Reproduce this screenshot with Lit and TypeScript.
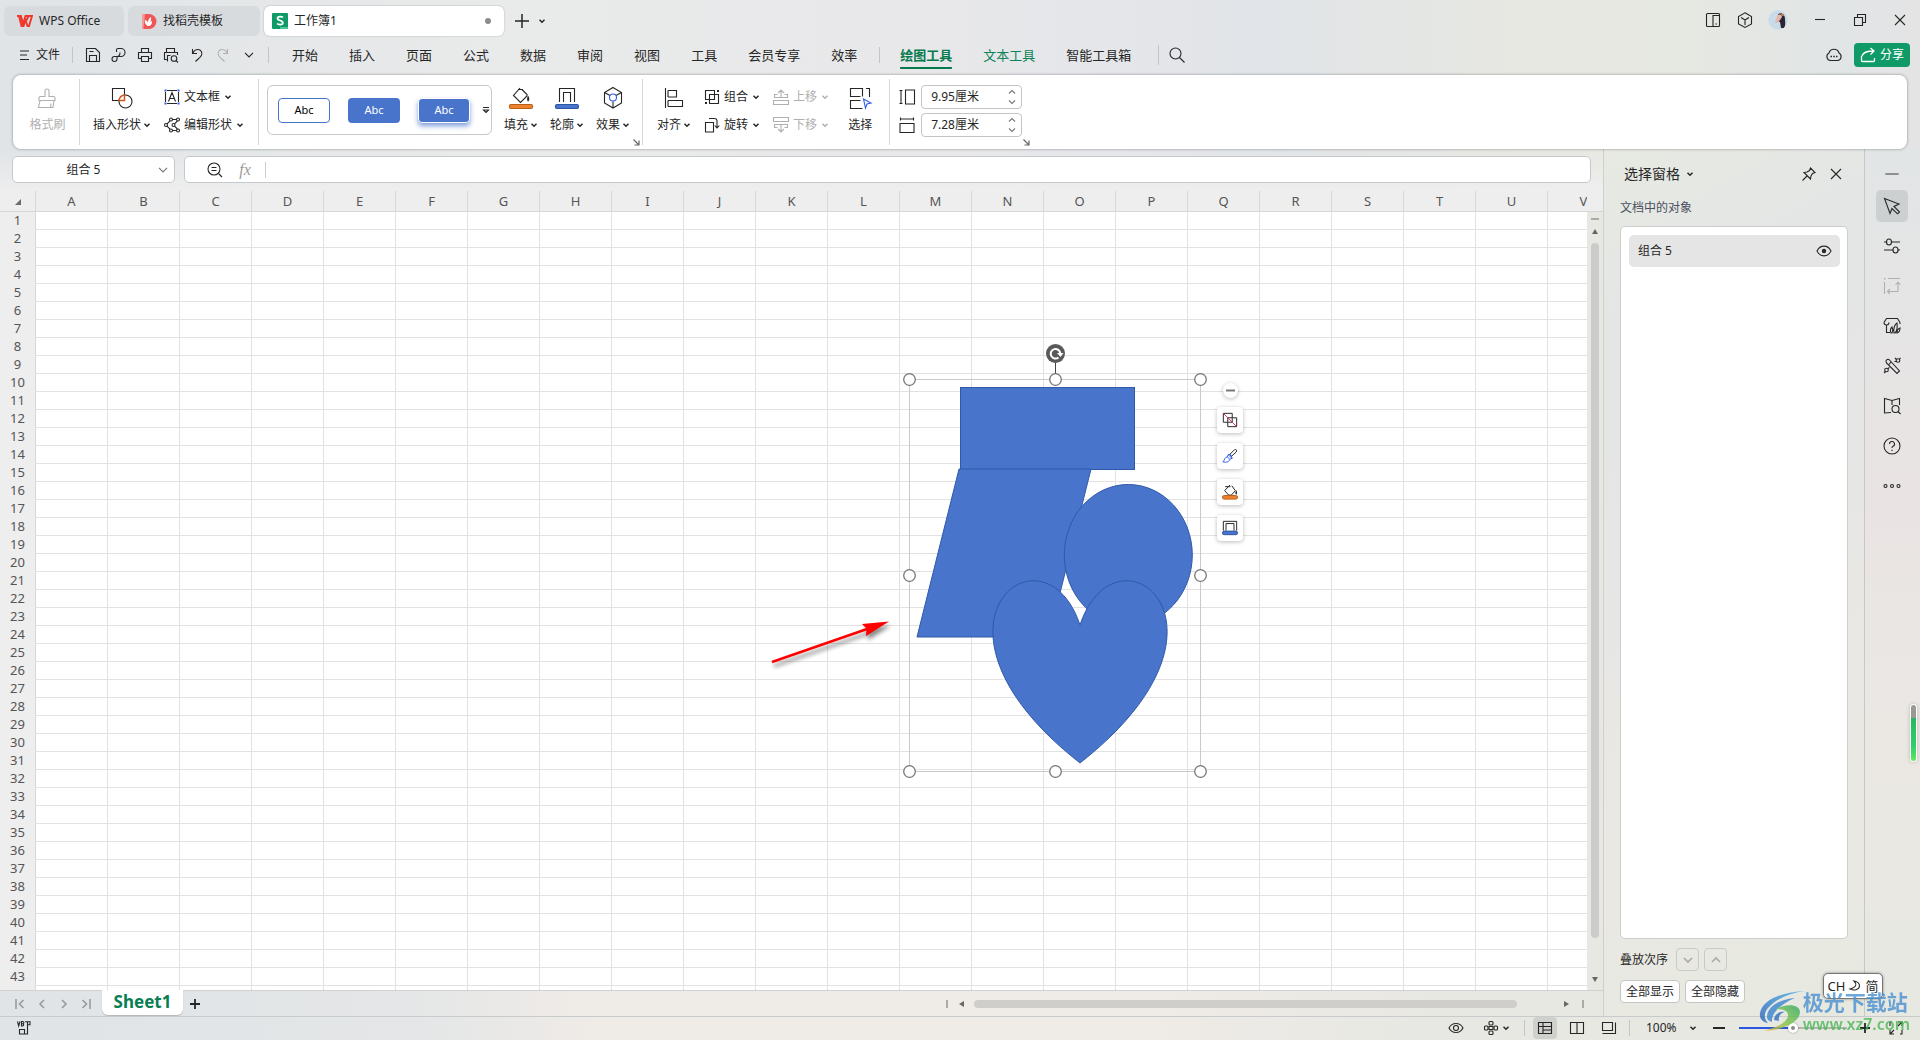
import { LitElement, html, svg, css, nothing, type TemplateResult, type SVGTemplateResult } from "lit";
import { customElement, state } from "lit/decorators.js";
import { classMap } from "lit/directives/class-map.js";

const art = (size: number, body: SVGTemplateResult, box = size) =>
  html`<svg class="icon" width=${size} height=${size} viewBox="0 0 ${box} ${box}" aria-hidden="true">${body}</svg>`;

const chevron = html`<svg class="icon" width="8" height="8" viewBox="0 0 8 8" aria-hidden="true">
  <path d="M1.5 2.8 4 5.2 6.5 2.8" stroke-width="1.5" />
</svg>`;

const thinChevron = html`<svg class="icon" width="10" height="8" viewBox="0 0 10 8" aria-hidden="true">
  <path d="M1 1.8 5 6 9 1.8" />
</svg>`;

const upChevron = html`<svg class="icon" width="8" height="6" viewBox="0 0 8 6" aria-hidden="true">
  <path d="M1 4.5 4 1.5 7 4.5" />
</svg>`;

const downChevron = html`<svg class="icon" width="8" height="6" viewBox="0 0 8 6" aria-hidden="true">
  <path d="M1 1.5 4 4.5 7 1.5" />
</svg>`;

const launcher = html`<button class="launcher" aria-label="更多设置">
  <svg class="icon" width="7" height="7" viewBox="0 0 7 7" aria-hidden="true"><path d="M.5.5 5.5 5.5M6 1.5V6H1.5" stroke-width="1.2" /></svg>
</button>`;

const save = art(16, svg`<path d="M1.5 1.5h9l4 4v9h-13zM4.5 14v-5.500h7V14M4.500 4.500h4"/>`);
const pdf = art(16, svg`<path d="M5.500 5V3A1.500 1.500 0 0 1 7 1.500h3a4 4 0 0 1 0 8H3.500a2.500 2.500 0 1 0 2.500 2.500V9.500c2 0 3-1.500 3-4"/>`);
const print = art(16, svg`<path d="M4.500 5V1.500h7V5M4.500 11.500h-3v-6h13v6h-3M4.500 9.500h7v5h-7z"/>`);
const preview = art(16, svg`<path d="M3.500 5V1.500h8V5M4 12.500H1.500v-7h13V8M4.500 14.500v-6h3"/><circle cx="11" cy="11.500" r="2.800"/><path d="m13 13.500 2 2"/>`);
const undo = art(16, svg`<path d="M3.500 2v4.500H8M3.800 6.200C5 3.500 7 2.500 9 2.500a4 4 0 0 1 3.500 5.800C11.500 10.500 9 12 6.500 14.500"/>`);
const redo = art(16, svg`<path d="M12.500 2v4.500H8M12.200 6.200C11 3.500 9 2.500 7 2.500a4 4 0 0 0-3.500 5.800C4.500 10.500 7 12 9.500 14.500"/>`);

const brush = art(24, svg`<path d="M10 10.500V5a2 2 0 0 1 4 0v5.500h4.500A1.500 1.500 0 0 1 20 12v2.500H4V12a1.500 1.500 0 0 1 1.500-1.500zM5 14.500l-1.500 7H18l1-7M15.500 21.500l.5-4"/>`);
const insertShape = art(24, svg`<path d="M10 14.500H2.500v-12h12V9"/><circle cx="15.500" cy="15.500" r="6.500"/><path class="orange" d="M9 14.500a6.500 6.500 0 0 1 5.500-5.500v5.500z"/>`);
const textBox = art(16, svg`<path d="M3 1.500h10M3 14.500h10M1.500 3v10M14.500 3v10M4.500 12.500 8 3.500l3.500 9M5.800 9.500h4.400"/><path class="bluefill" d="M.5.500h2v2h-2zM13.500.500h2v2h-2zM.5 13.500h2v2h-2zM13.500 13.500h2v2h-2z"/>`);
const editShape = art(16, svg`<circle cx="7" cy="2.500" r="1.500"/><circle cx="14" cy="2.500" r="1.500"/><circle cx="2" cy="8" r="1.500"/><circle cx="9.500" cy="8" r="1.500"/><circle cx="7" cy="13.500" r="1.500"/><circle cx="14" cy="13.500" r="1.500"/><path d="M8.500 2.500h4M6 3.800 3 6.800M6 12.200 3 9.200M8.500 13.500h4M13.500 4 10.500 6.800M13.500 12 10.500 9.200"/>`);
const fillIcon = art(24, svg`<path d="M9 3.500h5M11 2 4.500 9.500 11.500 16.500 18 10V8.500L13 3.500"/><path class="ink" d="M19 9.500c1.500 2 1.800 5 0 6-1.500-1-1-4 0-6z"/><rect class="orangebar" x=".5" y="18.500" width="23" height="4" rx="1.500"/>`);
const lineIcon = art(24, svg`<path d="M4.500 16V2.500h15V16M8.500 16V6.500h7V16"/><rect class="bluebar" x=".5" y="18.500" width="23" height="4" rx="1.500"/>`);
const effectIcon = art(24, svg`<path d="M12 1.500 20.500 6.500v10.500L12 22 3.500 17V6.500zM3.500 6.500 9 9.500M20.500 6.500 15 9.500M12 15.500V22"/><circle class="blue" cx="12" cy="11.500" r="3.500"/>`);
const alignIcon = art(24, svg`<path d="M3.500 2v20M6 4.500h8.500v6.500H6M6 14.500h14.500v6H6M6 4.500v6.500M6 14.500v6"/>`);
const groupIcon = art(16, svg`<path d="M1.500 1.500h9v9h-9zM5.500 5.500h9v9h-9z"/><path class="ink" d="M13 1h2v2h-2zM1 13h2v2H1z"/>`);
const rotateIcon = art(16, svg`<path d="M1.500 5.500h8v9.500h-8zM5 1.500h5.500a2.500 2.500 0 0 1 2.500 2.500v7M10.800 8.500 13 11l2.300-2.500"/>`);
const raiseIcon = art(16, svg`<path d="M8 1v7M5 4l3-3 3 3M4.500 5.500h-3v3h13v-3h-3M.5 11.500h15v4H.5z"/>`);
const lowerIcon = art(16, svg`<path d="M8 15V8M5 12l3 3 3-3M4.500 10.500h-3v-3h13v3h-3M.5.500h15v4H.5z"/>`);
const selectIcon = art(24, svg`<path d="M12.500 10.500h-10v-8h12v8M18 2.500h3.500V11M12.500 14.500h-10v8h12"/><path class="blue" d="m15.500 13 7.500 4-4 1-1.500 4z"/>`);
const heightIcon = art(16, svg`<path d="M.5 1.500h3M.5 14.500h3M2 2v12M6.500 1h9v14h-9z"/>`);
const widthIcon = art(16, svg`<path d="M1.500.5v3M14.500.5v3M2 2h12M1 6.500h14v9H1z"/>`);

const ribbonTabs = ["开始", "插入", "页面", "公式", "数据", "审阅", "视图", "工具", "会员专享", "效率"];
const contextTabs = ["绘图工具", "文本工具", "智能工具箱"];
const columns = Array.from({ length: 22 }, (_, i) => String.fromCharCode(65 + i));
const numberedRows = 43;
const rows = Array.from({ length: numberedRows + 1 }, (_, i) => i + 1);

const sideTools: Array<{ label: string; icon: TemplateResult; on?: boolean; dim?: boolean }> = [
  { label: "选择", on: true, icon: art(18, svg`<path d="M1.500 1.500 16 7l-5 2.500 5.500 5.500-2 1.800L9 11.500 7 16.500z"/>`) },
  { label: "属性", icon: art(18, svg`<ellipse cx="6" cy="5" rx="2.500" ry="3"/><ellipse cx="12.500" cy="13" rx="2.500" ry="3"/><path d="M1 5h2.500M8.500 5H17M1 13h9M15 13h2"/>`) },
  { label: "转换", dim: true, icon: art(18, svg`<path d="M5 1.500h12M1.500 5v12"/><path class="ink" d="M1 1h1.500v1.500H1z"/><path d="M15 6v8.500H5M12.500 8 15 5l2.500 3M7 12l-2.500 2.500L7 17"/>`) },
  { label: "图表", icon: art(18, svg`<path d="M3.500 8v7.500H7M1 5.500 3.500 1.500h11L17 5.500M1 5.500a2.500 2.500 0 0 0 5 0M17 5.500V7"/><path d="M8 16c-1.500-3 0-5 1-6 1 2 1 4 0 6zM11 16c-1-5 1-9 3-10 .5 4 0 8-2 10zM14 16c0-3 1.500-4.500 3-5 0 3-1 4.500-3 5z"/>`) },
  { label: "美化", icon: art(18, svg`<path d="M3 4.500a2 2 0 0 1 3.500-1.500L16.500 14 14 16.500 3.500 6zM6 7.500 8 5"/><circle cx="15" cy="3.500" r="1.800"/><circle cx="3.500" cy="13" r="1.800"/><path d="M12 1l1.500 1.500M16.500 2l1-1M11.500 4.500h2M1 16l1.500-1.500M5 11.500l1.500-1"/>`) },
  { label: "资料", icon: art(18, svg`<path d="M8 15.500 1.500 16V1.500L9 3.500l7.500-2V8M9 3.500V8"/><circle cx="12.500" cy="12" r="3.500"/><path d="m15 14.500 2.500 2.500"/>`) },
  { label: "帮助", icon: art(18, svg`<circle cx="9" cy="9" r="8"/><path d="M6.500 7a2.500 2.500 0 1 1 3.500 2.300c-.8.4-1 .8-1 1.700M9 12.800v1.200"/>`) },
  { label: "更多", icon: art(18, svg`<circle cx="2.500" cy="9" r="1.500"/><circle cx="9" cy="9" r="1.500"/><circle cx="15.500" cy="9" r="1.500"/>`) },
];

const floatTools = [
  { label: "取消组合", icon: art(18, svg`<path d="M7 11.500H1.500v-10h10V7M12 6.500h4.500v10h-10V12M6.500 12V6.500H12M11.500 7v4.500H7"/><path class="red" d="m1.500 1.500 15 15"/>`) },
  { label: "样式", icon: art(18, svg`<path d="m9 7 5-5c1-1 3.500 0 2 2.500l-5.500 5z"/><path class="blue" d="M9 7 7 7.500 6 10c-3 0-3 4-5 5.500 3.500 1 7 .5 8-3l2.500-1-1-2zM6 10l2.500 2.500M7 7.500l4 4"/>`) },
  { label: "填充", icon: art(18, svg`<path d="M3.500 3h6M9 1 3 7.500l4.500 5h3L15 7.500 11 2"/><path class="ink" d="M16 7c1.500 2 1 4 0 5-1.500-1-1-3 0-5z"/><rect class="orangebar" x=".5" y="13" width="17" height="4" rx="2"/>`) },
  { label: "轮廓", icon: art(18, svg`<path d="M1.500 12V1.500h15V12M4.500 12V4h9v8"/><rect class="bluebar" x=".5" y="12.500" width="17" height="4" rx="2"/>`) },
];

@customElement("app-root")
export class AppRoot extends LitElement {
  @state() private activeTab = "绘图工具";
  @state() private objectShown = true;

  static styles = css`
    :host {
      display: block;
      font: 12px/16px "Noto Sans", "Noto Sans CJK SC", sans-serif;
      color: #262626;
    }
    * { box-sizing: border-box; }
    button, input, select {
      font: inherit;
      color: inherit;
      margin: 0;
      padding: 0;
      border: 0;
      background: none;
      outline: none;
    }
    button { display: inline-flex; align-items: center; justify-content: center; white-space: nowrap; }
    a { color: inherit; text-decoration: none; }
    .icon { display: block; flex: none; fill: none; stroke: currentColor; stroke-width: 1.1; overflow: visible; }
    .icon .ink { fill: currentColor; stroke: none; }
    .icon .blue { stroke: #2f5bea; }
    .icon .bluefill { fill: #2f5bea; stroke: none; }
    .icon .orange { stroke: #d0561c; fill: #fff; stroke-width: 1.5; }
    .icon .red { stroke: #d8365a; }
    .icon .orangebar { fill: #ee822f; stroke: #b85d15; }
    .icon .bluebar { fill: #4874cb; stroke: #2c55a3; }
    .dim { color: #b0b0b0; }
    .spacer { flex: 1; }

    .app {
      position: relative;
      height: 100vh;
      display: flex;
      flex-direction: column;
      overflow: hidden;
      background:
        linear-gradient(90deg, #e0e4e7 0%, #e9eaea 26%, #e8e8ea 48%, #e1e4e8 66%, #e7e8e1 80%, #e6e8e2 88%, #e1e5e5 95%, #e4e4e5 100%);
    }

    .titlebar { display: flex; align-items: center; flex: none; height: 40px; padding: 2px 12px 0 4px; gap: 4px; }
    .doc-tab { display: flex; align-items: center; gap: 6px; height: 30px; padding: 0 12px; border-radius: 6px; background: #d8dbde; }
    .doc-tab.home { width: 120px; }
    .doc-tab.store { width: 132px; }
    .doc-tab.current { width: 240px; padding: 0 13px 0 8px; background: #fff; box-shadow: 0 0 2px #0004; }
    .dot { width: 6px; height: 6px; border-radius: 50%; background: #8c8c8c; margin-left: auto; }
    .new-tab { margin-left: 6px; }
    .new-menu { margin-left: 4px; }
    .window-tools { display: flex; align-items: center; gap: 14px; margin-left: auto; margin-top: -2px; }
    .window-tools button { width: 18px; height: 20px; }
    .window-tools .avatar { width: 20px; border-radius: 50%; overflow: hidden; }
    .window-buttons { display: flex; gap: 24px; margin-left: 10px; }
    .window-tools .window-buttons button { width: 16px; }

    .menubar { display: flex; align-items: center; flex: none; height: 30px; margin-bottom: 5px; padding: 0 10px 0 18px; }
    .file { gap: 6px; }
    .rule { width: 1px; height: 16px; background: #c3c6c9; flex: none; }
    .quick { display: flex; align-items: center; gap: 10px; padding: 0 11px 0 12px; }
    .quick button { width: 16px; height: 20px; }
    .file + .rule { margin-left: 12px; }
    .tabs { display: flex; align-items: center; gap: 31px; font-size: 13px; margin-left: 23px; }
    .tabs.context { margin-left: 20px; }
    .tabs + .rule { margin-left: 22px; }
    .tabs.context + .rule { margin-left: 27px; height: 20px; }
    .tab { height: 28px; border-bottom: 2px solid transparent; padding-top: 2px; border-radius: 1px; }
    .tab.green { color: #0b8457; }
    .tab.active { color: #067a4f; font-weight: 700; border-color: #067a4f; }
    .search { margin-left: 10px; }
    .cloud { margin-left: auto; }
    .share { width: 56px; height: 24px; margin-left: 12px; gap: 4px; border-radius: 4px; background: #0f9a67; color: #fff; }

    .ribbon { position: relative; z-index: 2; display: flex; flex: none; height: 74px; margin: 0 13px; border-radius: 8px; background: #fff; box-shadow: 0 0 3px #0006; }
    .group { position: relative; display: flex; padding: 10px 0; }
    .group::after { content: ""; position: absolute; right: 0; top: 4px; bottom: 4px; width: 1px; background: #d6d6d6; }
    .group:last-child::after { display: none; }
    .group.format { width: 67px; padding-left: 2px; justify-content: center; }
    .group.insert { padding-left: 13px; padding-right: 15px; gap: 13px; }
    .group.style { padding-left: 8px; padding-right: 13px; gap: 12px; }
    .group.arrange { padding-left: 14px; padding-right: 18px; gap: 13px; }
    .group.size { padding-left: 9px; padding-right: 8px; }
    .big { flex-direction: column; justify-content: flex-start; gap: 7px; padding-top: 1px; }
    .big .caption { display: flex; align-items: center; gap: 2px; }
    .pair { display: flex; flex-direction: column; align-items: flex-start; gap: 4px; }
    .small { height: 24px; gap: 4px; }
    .pair + .pick { margin-left: 6px; }
    .gallery { display: flex; align-items: center; gap: 18px; width: 225px; height: 50px; padding-left: 10px; border: 1px solid #c8c8c8; border-radius: 6px; }
    .swatch { width: 52px; height: 25px; border-radius: 4px; font-size: 11px; background: #4874cb; color: #fff; }
    .swatch.outline { background: #fff; color: #000; border: 1px solid #4874cb; }
    .swatch.raised { border: 1px solid #fff; box-shadow: 0 3px 5px #4874cbb0; }
    .gallery .more { margin-left: -6px; }
    .launcher { position: absolute; right: 3px; bottom: 3px; color: #666; }
    .size .launcher { right: 0; }
    .measure { display: flex; align-items: center; gap: 6px; height: 24px; }
    .spin { display: flex; width: 101px; height: 24px; border: 1px solid #c4c4c4; border-radius: 4px; }
    .spin input { width: 81px; padding-left: 9px; }
    .spin .steps { display: flex; flex-direction: column; align-items: center; justify-content: space-between; padding: 3px 0; width: 20px; color: #777; }

    .workspace { display: flex; flex: 1; min-height: 0; }
    .book { display: flex; flex-direction: column; flex: 1; min-width: 0; background: linear-gradient(#eee0, #eee 42px, #eee0 43px); }
    .formula-row { display: flex; gap: 9px; padding: 7px 12px 8px; }
    .name-box, .formula { display: flex; align-items: center; height: 27px; background: #fff; border: 1px solid #c6c9cb; border-radius: 5px; }
    .name-box { width: 163px; }
    .name-box input { width: 141px; text-align: center; }
    .name-box button { width: 18px; color: #777; }
    .formula { flex: 1; gap: 12px; padding-left: 22px; }
    .formula input { flex: 1; min-width: 0; }
    .fx { width: 20px; font: italic 16px/20px "Liberation Serif", serif; color: #999; }
    .formula .rule { margin-left: -2px; background: #ccc; }

    .sheet { position: relative; display: flex; flex: 1; min-height: 0; }
    .viewport { flex: 1; min-width: 0; overflow: hidden; background: #fff; }
    .cells { width: 1620px; table-layout: fixed; border-collapse: separate; border-spacing: 0; font-size: 13px; color: #555; }
    .cells th, .cells td { height: 18px; padding: 0; border-right: 1px solid #e2e2e2; border-bottom: 1px solid #e2e2e2; overflow: hidden; }
    .cells th { font-weight: 400; line-height: 16px; background: #eee; vertical-align: top; }
    .cells thead th { height: 21px; width: 72px; padding-top: 2px; border-color: #d6d6d6; }
    .cells thead th.corner { width: 36px; }
    .cells tbody th { border-right-color: #d6d6d6; border-bottom-color: #eee; }
    .corner svg { margin: 6px 0 0 15px; display: block; fill: #6b6b6b; }

    .vscroll { display: flex; flex-direction: column; align-items: center; width: 16px; padding: 20px 0 6px; background: linear-gradient(#eee 20px, #d6d6d6 20px, #d6d6d6 21px, transparent 21px); color: #666; }
    .split { background: #a9aba9; flex: none; }
    .vscroll .split { width: 8px; height: 2px; margin-top: 7px; }
    .vscroll .arrow { height: 23px; }
    .arrow svg { fill: #666; }
    .vscroll .thumb { width: 8px; flex: 1; border-radius: 4px; background: #cbccca; }
    .vscroll .arrow.end { height: 20px; margin-top: 31px; margin-bottom: -5px; }

    .drawing { position: absolute; left: 900px; top: 139px; }
    .pointer { position: absolute; left: 750px; top: 409px; filter: drop-shadow(2px 4px 2px #0007); }
    .shape { fill: #4874cb; stroke: #3059a8; stroke-width: 1; }
    .frame { fill: none; stroke: #c9cacc; }
    .handle { fill: #fff; stroke: #777; stroke-width: 1.3; }
    .float { position: absolute; left: 1217px; top: 192px; display: flex; flex-direction: column; align-items: center; gap: 10px; }
    .float button { width: 26px; height: 26px; border-radius: 4px; background: #fff; box-shadow: 0 1px 4px #0004; }
    .float .icon { width: 16px; height: 16px; }
    .float .fold { width: 15px; height: 15px; border-radius: 50%; margin-bottom: -1px; color: #777; }
    .float .fold .icon { width: 9px; height: 9px; }

    .sheetbar, .status {
      display: flex;
      align-items: center;
      flex: none;
    }
    .sheetbar { height: 26px; border-top: 1px solid #cfd1d2; background: linear-gradient(90deg, #e0e4e7, #e4e6e7 25%, #efebe7 36%, #efebe7 72%, #e8e8e3 90%, #e7e8e1); padding-left: 15px; }
    .nav { display: flex; gap: 12px; color: #999; }
    .nav button { width: 10px; height: 20px; }
    .sheet-tab { width: 81px; height: 25px; margin: -3px 0 0 11px; border-radius: 0 0 6px 6px; background: #fff; color: #087f53; font-size: 17px; line-height: 22px; font-weight: 700; box-shadow: 0 1px 1px #0003; }
    .add { margin-left: 7px; width: 10px; }
    .hscroll { display: flex; align-items: center; margin-left: auto; flex: 0 1 657px; padding-right: 19px; }
    .hscroll .split { width: 2px; height: 8px; }
    .hscroll .arrow { width: 26px; }
    .hscroll .thumb { flex: 1; height: 8px; border-radius: 4px; background: #d0cecb; }
    .hscroll .arrow.end { width: 32px; margin-left: 33px; }

    .pane { display: flex; flex-direction: column; width: 261px; flex: none; padding: 16px 16px 13px; border-left: 1px solid #cdd0cd; background: linear-gradient(150deg, #e7e9e2, #e3e6e5 20%, #e6e6e5 45%, #eae8e4 65%, #e7e9e0); }
    .pane-head { display: flex; align-items: center; height: 18px; padding: 0 6px 0 4px; }
    .pane-title { gap: 6px; font-size: 14px; line-height: 18px; }
    .pin { margin-left: auto; margin-right: 14px; }
    .pane-sub { margin: 17px 0 10px; color: #4a5160; }
    .objects { flex: 1; margin: 0; padding: 8px 7px 7px 8px; list-style: none; background: #fff; border: 1px solid #cbcecb; border-radius: 5px; }
    .object { display: flex; align-items: center; justify-content: space-between; height: 32px; padding: 0 8px 0 9px; border-radius: 5px; background: #e5e5e5; }
    .order { display: flex; align-items: center; gap: 5px; margin-top: 9px; }
    .order span { margin-right: 3px; }
    .order button { width: 23px; height: 23px; border: 1px solid #c8cac6; border-radius: 4px; color: #aaa; }
    .bulk { display: flex; gap: 5px; margin-top: 9px; }
    .bulk button { width: 60px; height: 23px; border: 1px solid #c4c6c3; border-radius: 4px; background: #fdfdfd; }

    .side { display: flex; flex-direction: column; align-items: center; width: 56px; flex: none; gap: 8px; padding: 24px 1px 0 0; border-left: 1px solid #c6c8c8; background: linear-gradient(#e2e5e6, #e9e4e3 40%, #ebe8e4 70%, #e7e8e1); }
    .side button { width: 32px; height: 32px; border-radius: 5px; }
    .side button.on { background: #cdd0d0; }
    .side button.collapse { border-radius: 1px; width: 14px; height: 2px; background: #909090; margin-bottom: 7px; }

    .status { height: 24px; border-top: 1px solid #c8cbcc; padding: 0 17px 1px; background: linear-gradient(90deg, #e0e4e7, #e4e6e7 22%, #efebe7 31%, #efebe7 60%, #e7e8e3 74%, #e7e8e0); }
    .views { display: flex; gap: 8px; margin: 0 8px; }
    .views button { width: 24px; height: 22px; border-radius: 4px; }
    .views .on { background: #cfd1cc; }
    .layout-menu { gap: 3px; margin: 0 14px 0 19px; }
    .zoom-pick { display: grid; align-items: center; margin-left: 16px; width: 51px; }
    .zoom-pick select { grid-area: 1 / 1; appearance: none; width: 51px; }
    .zoom-pick svg { grid-area: 1 / 1; justify-self: end; pointer-events: none; }
    .minus { margin: 0 14px 0 16px; }
    .plus { margin: 0 18px 0 12px; }
    .zoom { appearance: none; width: 108px; height: 16px; }
    .zoom::-webkit-slider-runnable-track { height: 2px; background: linear-gradient(90deg, #2b57e0 50%, #b4b5b2 50%); }
    .zoom::-webkit-slider-thumb { appearance: none; width: 10px; height: 10px; margin-top: -4px; border-radius: 50%; border: 3px solid #fff; background: #8a8a8a; box-shadow: 0 0 2px #0006; }

    .ime { position: absolute; right: 37px; bottom: 41px; z-index: 3; display: flex; align-items: center; justify-content: center; gap: 4px; width: 60px; height: 26px; border: 1px solid #777; border-radius: 5px; background: #fff; box-shadow: 0 0 3px #0006; font-size: 13px; }
    .brandmark { position: absolute; right: 10px; bottom: 6px; z-index: 4; display: flex; opacity: 0.8; pointer-events: none; }
    .brandmark .words { display: flex; flex-direction: column; margin-left: -4px; }
    .brandmark .cn { font-size: 21px; line-height: 24px; font-weight: 700; color: #4a90d0; }
    .brandmark .url { font-size: 16px; line-height: 20px; color: #4db858; font-weight: 600; }
    .meter { position: absolute; right: 3px; top: 704px; z-index: 4; width: 7px; height: 58px; border-radius: 4px; border: 1px solid #fff; background: linear-gradient(#999a94 13px, #25b860 13px, #2fd06c 42px, #63e860); box-shadow: 0 0 4px #0003; }
  `;

  private renderBig(label: string, icon: TemplateResult, menu = true, extra = "") {
    return html`<button class="big ${extra}">${icon}<span class="caption">${label}${menu ? chevron : nothing}</span></button>`;
  }

  private renderSmall(label: string, icon: TemplateResult, dim = false) {
    return html`<button class=${classMap({ small: true, dim })}>${icon}<span>${label}</span>${chevron}</button>`;
  }

  private renderMeasure(label: string, value: string, icon: TemplateResult) {
    return html`<div class="measure">
      ${icon}
      <div class="spin">
        <input type="text" aria-label=${label} .value=${value} />
        <div class="steps">
          <button aria-label="增加">${upChevron}</button>
          <button aria-label="减少">${downChevron}</button>
        </div>
      </div>
    </div>`;
  }

  private renderTitlebar() {
    return html`<header class="titlebar">
      <a class="doc-tab home" href="#home">
        <svg width="17" height="12" viewBox="0 0 17 12" aria-hidden="true"><path d="M1 1h4l2 8 2.500-8h3L11 4.500H8.500M5 1l.5 0M3 1l2.500 10h2L9.500 5l2 6h1.500L16 1h-3.500" fill="none" stroke="#f0372c" stroke-width="1.900"/></svg>
        <span>WPS Office</span>
      </a>
      <a class="doc-tab store" href="#store">
        <svg width="17" height="17" viewBox="0 0 17 17" aria-hidden="true"><path d="M2 1h7a7.500 7.500 0 0 1 0 15H2z" fill="#ef5658"/><path d="M2 1h3L3.500 16H2z" fill="#f59a98"/><path d="M8 13C4 11 5 8 5 7c2 .5 3 2 3 3 0-3 1-5 3-6 0 3 .5 3-1 5l2-1c0 3-1 5-4 5z" fill="#fff"/></svg>
        <span>找稻壳模板</span>
      </a>
      <a class="doc-tab current" href="#book">
        <svg width="16" height="16" viewBox="0 0 16 16" aria-hidden="true"><rect width="16" height="16" rx="1" fill="#0f9a67"/><path d="M8 14h8v2H8z" fill="#4fc596"/><path d="M10.800 4.500C10 3.300 5.500 3 5.500 5.500c0 2.500 5.300 1.500 5.300 4.200 0 2.500-4.500 2.300-5.600.8" fill="none" stroke="#fff" stroke-width="1.800"/></svg>
        <span>工作簿1</span>
        <span class="dot"></span>
      </a>
      <button class="new-tab" aria-label="新建">${art(16, svg`<path d="M8 1v14M1 8h14" stroke-width="1.500"/>`)}</button>
      <button class="new-menu" aria-label="新建菜单">${chevron}</button>
      <div class="window-tools">
        <button aria-label="侧栏">${art(16, svg`<rect x="1.500" y="1.500" width="13" height="13" rx="1"/><path d="M8 14.500V3.500h6M10.500 12h1.500"/>`)}</button>
        <button aria-label="应用">${art(16, svg`<path d="m8 .8 6.500 3.700v7.500L8 15.500 1.500 12V4.500zM4 5.500 8 8l4-2.500M8 8v5"/>`)}</button>
        <button class="avatar" aria-label="账户">
          <svg width="20" height="20" viewBox="0 0 20 20" aria-hidden="true"><circle cx="10" cy="10" r="10" fill="#c9dbe8"/><path d="M10 4c4-2 7 1 7 5 0 3 1 6-1 9h-3l-1-6-2-1z" fill="#2c2430"/><path d="M9 6c1-2 5-2 5 1l-2 3-3 3-2 0z" fill="#e3b8ac"/><path d="M12 4c2-1 4 0 4 2l-2 0z" fill="#a97a50"/></svg>
        </button>
        <div class="window-buttons">
          <button aria-label="最小化">${art(12, svg`<path d="M1 5.500h10"/>`)}</button>
          <button aria-label="还原">${art(14, svg`<path d="M1.500 4.500h8v8h-8zM4.500 4V1.500h8v8H10"/>`)}</button>
          <button aria-label="关闭">${art(12, svg`<path d="m1 1 10 10M11 1 1 11"/>`)}</button>
        </div>
      </div>
    </header>`;
  }

  private renderMenubar() {
    const tab = (name: string, green = false) => html`<button
      class=${classMap({ tab: true, green, active: name === this.activeTab })}
      @click=${() => (this.activeTab = name)}
    >${name}</button>`;
    return html`<nav class="menubar">
      <button class="file">${art(12, svg`<path d="M2 2h9M2 6h7M2 10.500h9"/>`)}<span>文件</span></button>
      <span class="rule"></span>
      <div class="quick">
        <button aria-label="保存">${save}</button>
        <button aria-label="输出为PDF">${pdf}</button>
        <button aria-label="打印">${print}</button>
        <button aria-label="打印预览">${preview}</button>
        <button aria-label="撤销">${undo}</button>
        <button class="dim" aria-label="恢复">${redo}</button>
        <button aria-label="自定义">${thinChevron}</button>
      </div>
      <span class="rule"></span>
      <div class="tabs">${ribbonTabs.map((t) => tab(t))}</div>
      <span class="rule"></span>
      <div class="tabs context">${contextTabs.map((t, i) => tab(t, i < 2))}</div>
      <span class="rule"></span>
      <button class="search" aria-label="搜索">${art(16, svg`<circle cx="6.500" cy="6.500" r="5.500"/><path d="m10.500 10.500 5 5"/>`)}</button>
      <button class="cloud" aria-label="云同步">${art(16, svg`<path d="M4.500 13.500a4 4 0 0 1-1.500-7.500 5.200 5.200 0 0 1 10 0 4 4 0 0 1-1.500 7.500z"/><path d="M4.500 9.500H6M7.300 9.500h1.500M10 9.500h1.500" stroke-width="1.500"/>`)}</button>
      <button class="share">${art(16, svg`<path d="M1.500 9v4.500a1 1 0 0 0 1 1h11a1 1 0 0 0 1-1V11M2 9c1-3.500 4-5 11.500-5M10.500 1l3.500 3-3.500 3.500" stroke-width="1.300"/>`)}<span>分享</span></button>
    </nav>`;
  }

  private renderRibbon() {
    return html`<section class="ribbon">
      <div class="group format">${this.renderBig("格式刷", brush, false, "dim")}</div>
      <div class="group insert">
        ${this.renderBig("插入形状", insertShape)}
        <div class="pair">${this.renderSmall("文本框", textBox)}${this.renderSmall("编辑形状", editShape)}</div>
      </div>
      <div class="group style">
        <div class="gallery">
          <button class="swatch outline">Abc</button>
          <button class="swatch">Abc</button>
          <button class="swatch raised">Abc</button>
          <button class="more" aria-label="更多样式">${art(8, svg`<path d="M1 1.500h6M1.500 4h5L4 6.500z"/>`)}</button>
        </div>
        ${this.renderBig("填充", fillIcon)}${this.renderBig("轮廓", lineIcon)}${this.renderBig("效果", effectIcon)}
        ${launcher}
      </div>
      <div class="group arrange">
        ${this.renderBig("对齐", alignIcon)}
        <div class="pair">${this.renderSmall("组合", groupIcon)}${this.renderSmall("旋转", rotateIcon)}</div>
        <div class="pair">${this.renderSmall("上移", raiseIcon, true)}${this.renderSmall("下移", lowerIcon, true)}</div>
        ${this.renderBig("选择", selectIcon, false, "pick")}
      </div>
      <div class="group size">
        <div class="pair">${this.renderMeasure("高度", "9.95厘米", heightIcon)}${this.renderMeasure("宽度", "7.28厘米", widthIcon)}</div>
        ${launcher}
      </div>
    </section>`;
  }

  private renderDrawing() {
    const handles = [
      [909.5, 379.5], [1055.5, 379.5], [1200.5, 379.5],
      [909.5, 575.5], [1200.5, 575.5],
      [909.5, 771.5], [1055.5, 771.5], [1200.5, 771.5],
    ];
    return html`
      <svg class="drawing" width="312" height="460" viewBox="900 330 312 460" role="img" aria-label="组合 5">
        <rect class="shape" x="960.500" y="387.500" width="174" height="82" />
        <path class="shape" d="M959 469h132l-42 168H917z" />
        <ellipse class="shape" cx="1128.300" cy="555" rx="64" ry="70.500" />
        <path class="shape" d="M1080 625C1116 516.500 1256.600 625 1080 763 903.400 625 1044 516.500 1080 625z" />
        <rect class="frame" x="909.500" y="379.500" width="291" height="392" />
        <path d="M1055.500 360v14" stroke="#444" />
        <circle cx="1055.500" cy="353.500" r="9.500" fill="#595959" />
        <path d="M1058.500 357.500a4.800 4.800 0 1 1 1.800-4" fill="none" stroke="#fff" stroke-width="2" />
        <path d="M1057 353h6.500l-3 4z" fill="#fff" />
        ${handles.map(([x, y]) => svg`<circle class="handle" cx=${x} cy=${y} r="5.800"/>`)}
      </svg>
      <svg class="pointer" width="160" height="80" viewBox="0 0 160 80" aria-hidden="true">
        <path d="M22 62 117 29" stroke="#f00" stroke-width="2.500" />
        <path d="M139 21.500 112 24l4.500 4.500-.5 7.500z" fill="#f00" />
      </svg>
      <div class="float">
        <button class="fold" aria-label="收起">${art(9, svg`<path d="M0 4.500h9" stroke-width="2"/>`)}</button>
        ${floatTools.map((t) => html`<button aria-label=${t.label}>${t.icon}</button>`)}
      </div>`;
  }

  private renderBook() {
    return html`<main class="book">
      <div class="formula-row">
        <div class="name-box">
          <input type="text" aria-label="名称框" .value=${"组合 5"} />
          <button aria-label="名称列表">${thinChevron}</button>
        </div>
        <div class="formula">
          <button aria-label="查找">${art(16, svg`<circle cx="7" cy="7" r="6"/><path d="M4.500 5.500h5M4.500 8.500h5M11.500 11.500l3.500 3.500"/>`)}</button>
          <button class="fx" aria-label="插入函数">fx</button>
          <span class="rule"></span>
          <input type="text" aria-label="编辑栏" />
        </div>
      </div>
      <div class="sheet">
        <div class="viewport">
          <table class="cells">
            <thead>
              <tr>
                <th class="corner"><svg width="6" height="6" viewBox="0 0 6 6" aria-hidden="true"><path d="M6 0v6H0z" /></svg></th>
                ${columns.map((c) => html`<th scope="col">${c}</th>`)}
              </tr>
            </thead>
            <tbody>
              ${rows.map((r) => html`<tr><th scope="row">${r <= numberedRows ? r : nothing}</th>${columns.map(() => html`<td></td>`)}</tr>`)}
            </tbody>
          </table>
        </div>
        <div class="vscroll">
          <span class="split"></span>
          <button class="arrow" aria-label="向上"><svg width="6" height="5" viewBox="0 0 6 5"><path d="M3 0 6 5H0z" /></svg></button>
          <span class="thumb"></span>
          <button class="arrow end" aria-label="向下"><svg width="6" height="5" viewBox="0 0 6 5"><path d="M3 5 6 0H0z" /></svg></button>
        </div>
        ${this.renderDrawing()}
      </div>
      <div class="sheetbar">
        <div class="nav">
          <button aria-label="首个">${art(10, svg`<path d="M1 0v10M8.500 1l-4 4 4 4" stroke-width="1.600"/>`)}</button>
          <button aria-label="上一个">${art(10, svg`<path d="M7 1 3 5l4 4" stroke-width="1.600"/>`)}</button>
          <button aria-label="下一个">${art(10, svg`<path d="m3 1 4 4-4 4" stroke-width="1.600"/>`)}</button>
          <button aria-label="末个">${art(10, svg`<path d="M9 0v10M1.500 1l4 4-4 4" stroke-width="1.600"/>`)}</button>
        </div>
        <button class="sheet-tab">Sheet1</button>
        <button class="add" aria-label="新建工作表">${art(10, svg`<path d="M5 0v10M0 5h10" stroke-width="1.800"/>`)}</button>
        <div class="hscroll">
          <span class="split"></span>
          <button class="arrow" aria-label="向左"><svg width="5" height="6" viewBox="0 0 5 6"><path d="M0 3 5 0v6z" /></svg></button>
          <span class="thumb"></span>
          <button class="arrow end" aria-label="向右"><svg width="5" height="6" viewBox="0 0 5 6"><path d="M5 3 0 0v6z" /></svg></button>
          <span class="split"></span>
        </div>
      </div>
    </main>`;
  }

  private renderPane() {
    return html`<aside class="pane">
      <div class="pane-head">
        <button class="pane-title"><span>选择窗格</span>${chevron}</button>
        <button class="pin" aria-label="固定">${art(14, svg`<path d="M8.500 1 13 5.500 10.500 6.500 9 9l-.5 3L2 5.500 5 5l2.500-1.500zM5 9l-4.500 4.500"/>`)}</button>
        <button aria-label="关闭窗格">${art(12, svg`<path d="m1 1 10 10M11 1 1 11"/>`)}</button>
      </div>
      <div class="pane-sub">文档中的对象</div>
      <ul class="objects">
        <li class="object">
          <span>组合 5</span>
          <button aria-label="显示或隐藏" aria-pressed=${this.objectShown} @click=${() => (this.objectShown = !this.objectShown)}>
            ${art(16, svg`<path d="M1 8c3-6.500 11-6.500 14 0-3 6.500-11 6.500-14 0z"/><circle class="ink" cx="8" cy="8" r="2.200"/>`)}
          </button>
        </li>
      </ul>
      <div class="order">
        <span>叠放次序</span>
        <button aria-label="下移一层">${art(10, svg`<path d="m1 3 4 4 4-4" stroke-width="1.600"/>`)}</button>
        <button aria-label="上移一层">${art(10, svg`<path d="m1 7 4-4 4 4" stroke-width="1.600"/>`)}</button>
      </div>
      <div class="bulk"><button>全部显示</button><button>全部隐藏</button></div>
    </aside>`;
  }

  private renderStatus() {
    return html`<footer class="status">
      <button aria-label="宏">${art(14, svg`<path d="m.5.500 1.200 4.500L3 .5M4.500.5v4.500h1.300a1.200 1.200 0 0 0 0-2.300 1.100 1.100 0 0 0 0-2.200zM4.500 2.700h1.300M8 .8h5v3h-2.500M10.500.8V13H2.500V8.500h5V13"/>`)}</button>
      <span class="spacer"></span>
      <button aria-label="护眼模式">${art(16, svg`<path d="M1 8c3-6 11-6 14 0-3 6-11 6-14 0z"/><circle cx="8" cy="8" r="2.500"/>`)}</button>
      <button class="layout-menu" aria-label="阅读模式">${art(16, svg`<rect x="6" y="1.500" width="4" height="3.500" rx="1"/><rect x="6" y="11" width="4" height="3.500" rx="1"/><rect x="1.500" y="6" width="3.500" height="4" rx="1"/><rect x="11" y="6" width="3.500" height="4" rx="1"/><path d="M6 6.500h4v3H6z"/>`)}${chevron}</button>
      <span class="rule"></span>
      <div class="views">
        <button class="on" aria-label="普通视图">${art(14, svg`<path d="M.5 1.500h13v11H.5zM.5 5.500h13M5 1.500v11M5 9h8.500"/>`)}</button>
        <button aria-label="分页预览">${art(14, svg`<path d="M.5 1.500h13v11H.5zM7 1.500v11"/>`)}</button>
        <button aria-label="页面布局">${art(14, svg`<path d="M.5 1.500h10v8H.5zM.5 12.500h13v-11"/>`)}</button>
      </div>
      <span class="rule"></span>
      <label class="zoom-pick">
        <select aria-label="缩放比例"><option>100%</option></select>
        ${chevron}
      </label>
      <button class="minus" aria-label="缩小">${art(12, svg`<path d="M0 6h12" stroke-width="2"/>`)}</button>
      <input class="zoom" type="range" min="0" max="100" value="50" aria-label="缩放" />
      <button class="plus" aria-label="放大">${art(12, svg`<path d="M1 6h10M6 1v10" stroke-width="1.800"/>`)}</button>
      <button aria-label="全屏">${art(14, svg`<path d="M9 1h4v4M13 1 9 5M5 13H1V9M1 13l4-4M1 5V1h2M13 9v4h-2"/>`)}</button>
    </footer>`;
  }

  render() {
    return html`<div class="app">
      ${this.renderTitlebar()} ${this.renderMenubar()} ${this.renderRibbon()}
      <div class="workspace">
        ${this.renderBook()} ${this.renderPane()}
        <aside class="side">
          <button class="collapse" aria-label="收起侧栏"></button>
          ${sideTools.map((t) => html`<button class=${classMap({ on: !!t.on, dim: !!t.dim })} aria-label=${t.label}>${t.icon}</button>`)}
        </aside>
      </div>
      ${this.renderStatus()}
      <div class="meter"></div>
      <div class="ime"><span>CH</span>${art(12, svg`<path d="M5 1c3 3 3 6-4 8 4 2 9 1 9.500-3C10.500 3 8 1.500 5 1z"/>`)}<span>简</span></div>
      <div class="brandmark">
        <svg width="48" height="42" viewBox="0 0 48 42" aria-hidden="true">
          <defs>
            <linearGradient id="sky" x1="0" y1="1" x2="1" y2="0"><stop offset="0" stop-color="#2a62b8" /><stop offset="1" stop-color="#4bb4ee" /></linearGradient>
            <linearGradient id="leaf" x1="0" y1="1" x2="1" y2="0"><stop offset="0" stop-color="#f0b83a" /><stop offset=".5" stop-color="#7cc34a" /><stop offset="1" stop-color="#2fa860" /></linearGradient>
          </defs>
          <path d="M46 1C26 2 4 8 1 23c-1 6 3 9 8 10-5-5-4-12 2-17C19 8 32 3 46 1z" fill="url(#sky)" />
          <path d="M36 8C22 9 8 16 8 27c0 3 2 4 5 5-1-8 8-18 23-24z" fill="#3a86cf" />
          <path d="M17 19c10-6 24-5 24 3 0 9-15 18-36 19 14-4 24-9 24-16 0-4-5-6-12-6z" fill="url(#leaf)" />
          <path d="M15 30c0-5 5-9 11-8-5 1-7 5-6 9z" fill="#2f70c4" />
        </svg>
        <div class="words"><span class="cn">极光下载站</span><span class="url">www.xz7.com</span></div>
      </div>
    </div>`;
  }
}
